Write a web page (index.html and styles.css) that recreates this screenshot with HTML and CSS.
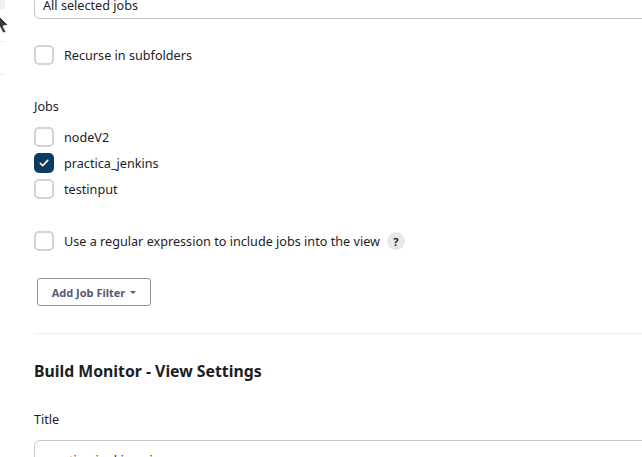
FILE: index.html
```html
<!DOCTYPE html>
<html>
<head>
<meta charset="utf-8">
<link rel="stylesheet" href="styles.css">
</head>
<body>
<div class="page">
  <div class="side">
    <div class="side-item top"></div>
    <div class="side-sep"></div>
    <div class="side-sep"></div>
  </div>
  <main class="main">
    <div class="input first"><span>All selected jobs</span></div>

    <label class="check row-recurse"><span class="box"></span><span>Recurse in subfolders</span></label>

    <div class="label jobs-label">Jobs</div>
    <div class="jobs">
      <label class="check"><span class="box"></span><span>nodeV2</span></label>
      <label class="check"><span class="box checked"><svg viewBox="0 0 20 20" width="20" height="20"><path d="M6.3 10.3l2.4 2.4 5-5.3" fill="none" stroke="#fff" stroke-width="1.6" stroke-linecap="round" stroke-linejoin="round"/></svg></span><span>practica_jenkins</span></label>
      <label class="check"><span class="box"></span><span>testinput</span></label>
    </div>

    <label class="check row-regex"><span class="box"></span><span>Use a regular expression to include jobs into the view</span><span class="help">?</span></label>

    <button class="btn">Add Job Filter <span class="caret"></span></button>

    <hr class="divider">

    <h2 class="heading">Build Monitor - View Settings</h2>

    <div class="label title-label">Title</div>
    <div class="input last"><span>practica_jenkins_view</span></div>
  </main>
</div>
<svg class="cursor" viewBox="0 0 10 22" width="10" height="22"><path d="M-4 1 L8 13 L3 14 L6 20 L3 21 L0 15 L-4 18 Z" fill="#3b3b3b" stroke="#fff" stroke-width="0.8"/></svg>
</body>
</html>
```
FILE: styles.css
```css
html, body {
  margin: 0;
  padding: 0;
  background: #fff;
  overflow: hidden;
}
body {
  font-family: "Noto Sans", "Open Sans", sans-serif;
  font-size: 12.65px;
  color: #1f2228;
  width: 642px;
  height: 457px;
  position: relative;
}
.page {
  display: flex;
}
.side {
  flex: none;
  width: 5px;
  display: flex;
  flex-direction: column;
}
.side-item.top {
  height: 9px;
  background: #f0f0f2;
}
.side-sep {
  height: 1px;
  background: #eeeff1;
  margin-top: 32px;
}
.main {
  margin-left: 29px;
  flex: 1;
  min-width: 0;
  display: flex;
  flex-direction: column;
  align-items: flex-start;
}
.input {
  box-sizing: border-box;
  width: 640px;
  height: 37px;
  border: 1px solid #c3c8cf;
  border-radius: 6px;
  padding: 0 8px;
  display: flex;
  align-items: center;
  color: #1f2228;
}
.input.first {
  margin-top: -18px;
  padding-top: 8px;
}
.input.last {
  margin-top: 11px;
  padding-top: 2px;
}
.check {
  display: flex;
  align-items: center;
  height: 20px;
  gap: 10px;
}
.box {
  box-sizing: border-box;
  width: 20px;
  height: 20px;
  border: 2px solid #d0d4d9;
  border-radius: 5px;
  display: flex;
  align-items: center;
  justify-content: center;
}
.box.checked {
  background: #0d3b5e;
  border-color: #0d3b5e;
}
.box.checked svg {
  flex: none;
}
.row-recurse {
  margin-top: 26px;
}
.label {
  height: 20px;
  line-height: 20px;
}
.jobs-label {
  margin-top: 31px;
}
.jobs {
  margin-top: 11px;
  display: flex;
  flex-direction: column;
  gap: 6px;
}
.row-regex {
  margin-top: 32px;
}
.help {
  width: 18px;
  height: 18px;
  border-radius: 50%;
  background: #e9e9ea;
  font-size: 11px;
  font-weight: 700;
  display: flex;
  align-items: center;
  justify-content: center;
  margin-left: -3px;
  color: #1f2228;
}
.btn {
  margin-top: 27px;
  margin-left: 3px;
  box-sizing: border-box;
  height: 28px;
  width: 114px;
  background: #fff;
  border: 1px solid #8d92a0;
  border-radius: 3px;
  font-family: "Noto Sans", "Open Sans", sans-serif;
  font-size: 11px;
  font-weight: 700;
  color: #555b72;
  display: flex;
  align-items: center;
  justify-content: center;
  gap: 5px;
  padding: 0;
}
.caret {
  width: 0;
  height: 0;
  border-left: 3px solid transparent;
  border-right: 3px solid transparent;
  border-top: 3px solid #555b72;
}
.divider {
  border: 0;
  height: 1px;
  background: #eceef0;
  width: 620px;
  margin: 27px 0 0 0;
}
.heading {
  margin: 26px 0 0 0;
  font-size: 15.8px;
  font-weight: 700;
  line-height: 22px;
  color: #1c1d22;
}
.title-label {
  margin-top: 27px;
}
.cursor {
  position: absolute;
  left: 0;
  top: 12px;
}
```
